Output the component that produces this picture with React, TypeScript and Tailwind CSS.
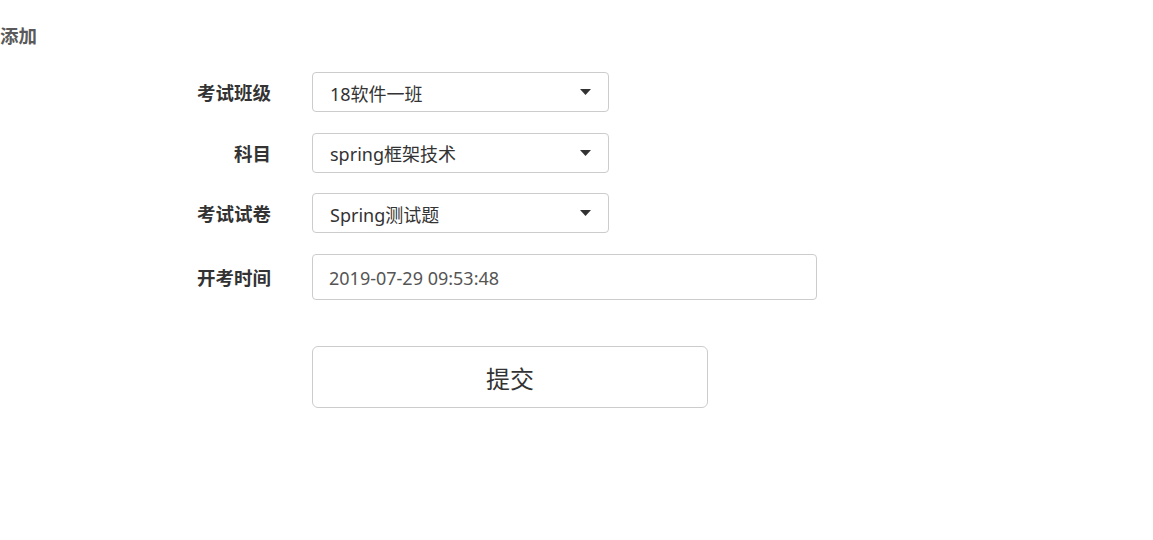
import { useState } from "react";

const FONT = "font-['Noto_Sans','Noto_Sans_CJK_SC',sans-serif]";

function Caret() {
  return (
    <svg width="11" height="6" viewBox="0 0 11 6" className="shrink-0">
      <path d="M0 0 L11 0 L5.5 6 Z" fill="#333" />
    </svg>
  );
}

function FakeSelect({ value }: { value: string }) {
  return (
    <div className="flex h-[40px] w-[297px] items-center justify-between rounded-[4px] border border-[#cccccc] bg-white pl-[17px] pr-[17px] text-[18px] text-[#333]">
      <span className="pt-[3px] leading-none">{value}</span>
      <Caret />
    </div>
  );
}

function Row({ label, children }: { label: string; children: React.ReactNode }) {
  return (
    <div className="flex items-center">
      <label className="w-[271px] pt-[2px] text-right text-[18.5px] font-bold text-[#333]">{label}</label>
      <div className="ml-[41px]">{children}</div>
    </div>
  );
}

export default function App() {
  const [time, setTime] = useState("2019-07-29 09:53:48");

  return (
    <div className={`min-h-[540px] w-full bg-white ${FONT}`}>
      <h2 className="pt-[24px] text-[18.5px] font-bold leading-[24px] text-[#5a5a5a]">添加</h2>

      <form className="mt-[24px] flex flex-col gap-[20.5px]" onSubmit={(e) => e.preventDefault()}>
        <Row label="考试班级">
          <FakeSelect value="18软件一班" />
        </Row>
        <Row label="科目">
          <FakeSelect value="spring框架技术" />
        </Row>
        <Row label="考试试卷">
          <FakeSelect value="Spring测试题" />
        </Row>
        <Row label="开考时间">
          <input
            value={time}
            onChange={(e) => setTime(e.target.value)}
            className="h-[46px] w-[505px] rounded-[4px] border border-[#cccccc] bg-white px-[16px] pt-[2px] text-[18px] text-[#555] outline-none"
          />
        </Row>

        <div className="mt-[26px] pl-[312px]">
          <button
            type="submit"
            className="h-[62px] w-[396px] rounded-[6px] border border-[#cccccc] bg-white pt-[3px] text-[24px] text-[#333]"
          >
            提交
          </button>
        </div>
      </form>
    </div>
  );
}
